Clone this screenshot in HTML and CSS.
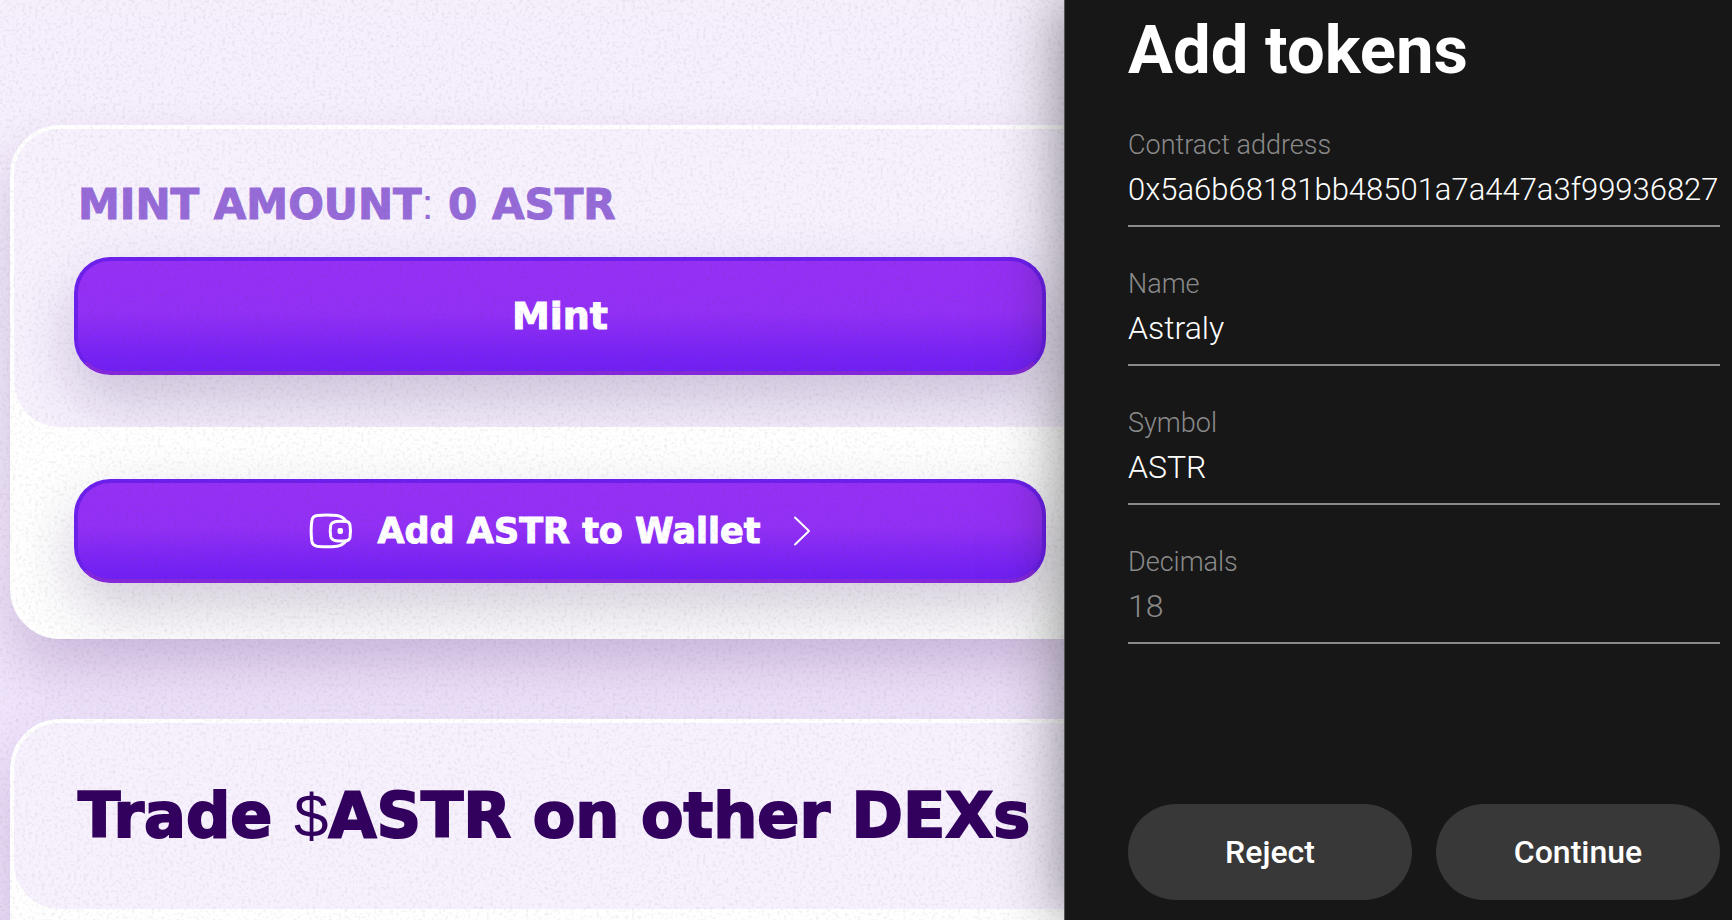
FILE: index.html
```html
<!DOCTYPE html>
<html lang="en">
<head>
<meta charset="utf-8">
<title>Astraly – Mint ASTR</title>
<link rel="stylesheet" href="styles.css">
</head>
<body>
<div class="layout">
  <main class="page">
    <section class="card">
      <div class="panel">
        <p class="amount">MINT AMOUNT<span class="light">:</span> 0 ASTR</p>
        <button class="cta cta-large" type="button">Mint</button>
      </div>
      <div class="card-footer">
        <button class="cta" type="button">
          <svg class="wallet" viewBox="0 0 44 36" fill="none" stroke="currentColor" stroke-width="3" stroke-linejoin="round" aria-hidden="true">
            <path d="M37 8C34.500 4.500 32 3 28 2.500Q18 1.500 8 2.500Q3.500 3 2.800 8Q1.500 18 2.800 28Q3.500 32.500 8 33.200Q18 34.500 28 33.200C32 32.700 34.500 31 37 28"/>
            <path d="M27 8.500Q32 7.800 37.500 8.500Q40.500 9 41 12Q42 18 41 24.500Q40.500 27.300 37.500 27.700Q32 28.500 27 27.700Q22.500 27 21.700 23.500Q20.700 18 21.700 12.500Q22.500 9.200 27 8.500Z"/>
            <rect x="28.500" y="15" width="5.500" height="6" rx="2" fill="currentColor" stroke="none"/>
          </svg>
          <span>Add ASTR to Wallet</span>
          <svg class="chevron" viewBox="0 0 18 32" fill="none" stroke="currentColor" stroke-width="2" stroke-linecap="round" stroke-linejoin="round" aria-hidden="true">
            <path d="M2 2.500L16 16L2 29.500"/>
          </svg>
        </button>
      </div>
    </section>
    <section class="card">
      <div class="panel panel-title">
        <h2 class="title">Trade <span class="light">$</span>ASTR on other DEXs</h2>
      </div>
      <div class="card-footer"></div>
    </section>
    <svg class="grain" aria-hidden="true">
      <filter id="grain" x="0" y="0" width="100%" height="100%" color-interpolation-filters="sRGB">
        <feTurbulence type="fractalNoise" baseFrequency="0.310" numOctaves="2" seed="4"/>
        <feColorMatrix values="0 0 0 0 0.250  0 0 0 0 0.250  0 0 0 0 0.250  0 0 0 0.650 -0.315"/>
      </filter>
      <rect width="100%" height="100%" filter="url(#grain)"/>
    </svg>
  </main>
  <aside class="drawer">
    <form class="form">
      <h1 class="heading">Add tokens</h1>
      <div class="field">
        <label for="address">Contract address</label>
        <input id="address" type="text" value="0x5a6b68181bb48501a7a447a3f99936827">
      </div>
      <div class="field">
        <label for="name">Name</label>
        <input id="name" type="text" value="Astraly">
      </div>
      <div class="field">
        <label for="symbol">Symbol</label>
        <input id="symbol" type="text" value="ASTR">
      </div>
      <div class="field">
        <label for="decimals">Decimals</label>
        <input id="decimals" type="text" value="18" disabled>
      </div>
      <div class="actions">
        <button type="button">Reject</button>
        <button type="button">Continue</button>
      </div>
    </form>
  </aside>
</div>
</body>
</html>
```

FILE: styles.css
```css
* {
  box-sizing: border-box;
}

body {
  margin: 0;
}

.layout {
  display: grid;
  grid-template-columns: minmax(0, 1064fr) minmax(0, 668fr);
  height: 100vh;
  overflow: hidden;
}

.page {
  position: relative;
  display: flex;
  flex-direction: column;
  gap: 80px;
  padding: 125px 0 0 10px;
  overflow: hidden;
  background: linear-gradient(180deg, #f6effc 0%, #f5eefc 20%, #f3eafb 60%, #f0e4fc 78%, #f0e5fc 100%);
  font-family: "DejaVu Sans", Verdana, sans-serif;
  font-weight: 700;
}

.card {
  flex: none;
  border: 4px solid #fff;
  border-width: 4px 0 0 4px;
  border-radius: 50px 0 0 50px;
  background: #fff;
  box-shadow: 0 32px 56px rgba(64, 16, 112, 0.19);
}

.panel {
  display: flex;
  flex-direction: column;
  gap: 32px;
  padding: 56px 18px 52px 60px;
  border-radius: 46px 0 0 46px;
  background: #f7f1fe;
  overflow: hidden;
}

.panel-title {
  padding: 60px 0 60px 64px;
}

.card-footer {
  padding: 52px 18px 56px 60px;
}

.amount {
  margin: 0;
  padding-left: 4px;
  color: #966bd8;
  font-size: 42px;
  line-height: 40px;
  white-space: nowrap;
  -webkit-text-stroke: 1px currentColor;
}

.title {
  margin: 0;
  color: #32005e;
  font-size: 62px;
  line-height: 66px;
  white-space: nowrap;
  -webkit-text-stroke: 2px currentColor;
}

.light {
  font-family: "Liberation Sans", Arial, sans-serif;
  font-weight: 400;
  -webkit-text-stroke: 0;
}

.cta {
  display: flex;
  align-items: center;
  justify-content: center;
  gap: 24px;
  width: 100%;
  min-height: 104px;
  padding: 0;
  border: 4px solid;
  border-color: #6c20ec #6c20ec #8428da #6c20ec;
  border-radius: 36px;
  background: linear-gradient(180deg, #9530f5 0%, #9330f5 45%, #7321f4 92%, #7020f2 100%);
  box-shadow: 0 26px 60px rgba(48, 16, 80, 0.21);
  color: #fff;
  font: inherit;
  font-size: 35px;
  -webkit-text-stroke: 1px currentColor;
}

.cta-large {
  min-height: 118px;
  font-size: 38px;
}

.wallet {
  width: 44px;
  height: 36px;
}

.chevron {
  width: 18px;
  height: 32px;
  margin-left: 8px;
}

.grain {
  position: absolute;
  inset: 0;
  width: 100%;
  height: 100%;
  opacity: 0.35;
  pointer-events: none;
}

.drawer {
  position: relative;
  border-left: 1px solid #55555a;
  background: #171717;
  box-shadow: 0 0 60px rgba(0, 0, 0, 0.5);
  font-family: Roboto, "Liberation Sans", sans-serif;
}

.form {
  display: flex;
  flex-direction: column;
  height: 100%;
  padding: 12px 12px 20px 63px;
}

.heading {
  margin: 0 0 42px;
  color: #fff;
  font-size: 67px;
  font-weight: 700;
  line-height: 76px;
}

.field {
  display: flex;
  flex-direction: column;
  height: 97px;
  margin-bottom: 42px;
  border-bottom: 2px solid #8a8a8a;
}

.field label {
  color: #8a8a8a;
  font-size: 27px;
  font-weight: 300;
  line-height: 30px;
}

.field input {
  width: 100%;
  height: 58px;
  padding: 0;
  border: 0;
  outline: 0;
  background: transparent;
  color: #fff;
  font: inherit;
  font-size: 32px;
  font-weight: 300;
}

.field #address {
  font-size: 31px;
}

.field input:disabled {
  color: #8a8a8a;
}

.actions {
  display: grid;
  grid-template-columns: 1fr 1fr;
  gap: 24px;
  margin-top: auto;
}

.actions button {
  height: 96px;
  border: 0;
  border-radius: 48px;
  background: #383838;
  color: #fff;
  font: inherit;
  font-size: 32px;
  font-weight: 500;
}
```
